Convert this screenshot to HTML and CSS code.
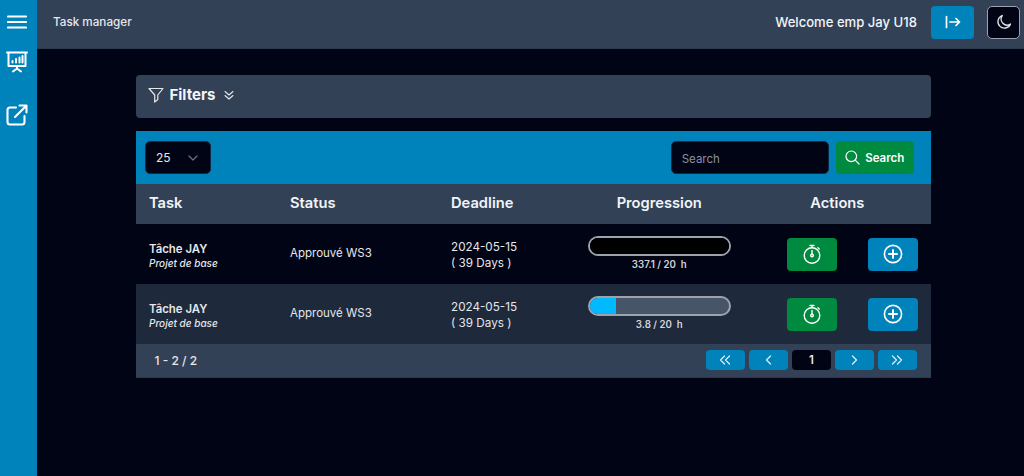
FILE: index.html
```html
<!DOCTYPE html>
<html lang="en">
<head>
<meta charset="utf-8">
<title>Task manager</title>
<link rel="stylesheet" href="styles.css">
</head>
<body>
<div class="app">
  <aside class="sidebar">
    <button class="side-btn menu" aria-label="Menu">
      <svg width="20" height="14" viewBox="0 0 20 14" fill="none" stroke="#fff" stroke-width="2.200" stroke-linecap="round"><path d="M1 1.500h18M1 7h18M1 12.500h18"/></svg>
    </button>
    <a class="side-btn board" aria-label="Board">
      <svg width="22" height="22" viewBox="0 0 22 22" fill="none" stroke="#fff" stroke-width="2" stroke-linecap="round" stroke-linejoin="round"><path d="M1 1.500h20M2.500 1.500v13.500h17V1.500M11 15v2.500M7 20.500l4-3 4 3"/><path d="M6.500 11.500v-1.500M10 11.500V8M13.500 11.500V6.500M16.500 11.500V5"/></svg>
    </a>
    <a class="side-btn external" aria-label="Open">
      <svg width="22" height="22" viewBox="0 0 22 22" fill="none" stroke="#fff" stroke-width="2.100" stroke-linecap="round" stroke-linejoin="round"><path d="M10 3.500H4a2.500 2.500 0 0 0-2.500 2.500v12A2.500 2.500 0 0 0 4 20.500h12a2.500 2.500 0 0 0 2.500-2.500v-6"/><path d="M13.500 1.500h7v7M20.500 1.500 9 13"/></svg>
    </a>
  </aside>
  <div class="main">
    <header class="topbar">
      <span class="app-title">Task manager</span>
      <div class="top-right">
        <span class="welcome">Welcome emp Jay U18</span>
        <button class="logout" aria-label="Log out">
          <svg width="16" height="14" viewBox="0 0 16 14" fill="none" stroke="#fff" stroke-width="1.700" stroke-linecap="round" stroke-linejoin="round"><path d="M1.500 1.500v11M5 7h9.500M11 3.500 14.500 7 11 10.500"/></svg>
        </button>
        <button class="theme" aria-label="Theme">
          <svg width="16" height="16" viewBox="0 0 16 16" fill="none" stroke="#e5e7eb" stroke-width="1.300" stroke-linejoin="round"><path d="M6.300 1.500A6.500 6.500 0 1 0 14.500 10 6 6 0 0 1 6.300 1.500Z"/></svg>
        </button>
      </div>
    </header>
    <main class="content">
      <section class="filters">
        <svg class="funnel" width="16" height="16" viewBox="0 0 16 16" fill="none" stroke="#e5e7eb" stroke-width="1.200" stroke-linejoin="round"><path d="M1 1.500h14L9.800 8v4.500L6.700 15V8Z"/></svg>
        <strong class="filters-label">Filters</strong>
        <svg width="10" height="10" viewBox="0 0 10 10" fill="none" stroke="#e5e7eb" stroke-width="1.100" stroke-linecap="round" stroke-linejoin="round"><path d="M1 1.500 5 5l4-3.500M1 5.500 5 9l4-3.500"/></svg>
      </section>
      <section class="panel">
        <div class="toolbar">
          <div class="select">
            <span>25</span>
            <svg width="10" height="6" viewBox="0 0 10 6" fill="none" stroke="#6b7280" stroke-width="1.200" stroke-linecap="round" stroke-linejoin="round"><path d="M1 1l4 4 4-4"/></svg>
          </div>
          <div class="search-group">
            <div class="search-input">Search</div>
            <button class="search-btn">
              <svg width="15" height="15" viewBox="0 0 15 15" fill="none" stroke="#fff" stroke-width="1.200" stroke-linecap="round"><circle cx="6.300" cy="6.300" r="5.300"/><path d="M10.200 10.200 14 14"/></svg>
              <span>Search</span>
            </button>
          </div>
        </div>
        <table class="tasks">
          <thead>
            <tr>
              <th class="col-task">Task</th>
              <th class="col-status">Status</th>
              <th class="col-deadline">Deadline</th>
              <th class="col-progress center">Progression</th>
              <th class="col-actions center">Actions</th>
            </tr>
          </thead>
          <tbody>
            <tr>
              <td class="task"><div class="task-name">Tâche JAY</div><div class="task-project">Projet de base</div></td>
              <td class="status">Approuvé WS3</td>
              <td class="deadline">2024-05-15<br>( 39 Days )</td>
              <td class="center">
                <div class="bar"><div class="fill over" style="width:100%"></div></div>
                <div class="hours">337.1 / 20&nbsp; h</div>
              </td>
              <td>
                <div class="actions">
                  <button class="act green" aria-label="Timer">
                    <svg width="20" height="22" viewBox="0 0 20 22" fill="none" stroke="#fff" stroke-width="1.400" stroke-linecap="round"><circle cx="10" cy="12.500" r="7.800"/><path d="M8 2.500h4M10 2.500v2M16 4.800l1.200 1.200"/><circle cx="10" cy="12.500" r="1.300"/><path d="M10 11V7.500"/></svg>
                  </button>
                  <button class="act blue" aria-label="Add">
                    <svg width="20" height="20" viewBox="0 0 20 20" fill="none" stroke="#fff" stroke-linecap="round"><circle cx="10" cy="10" r="8.600" stroke-width="1.600"/><path d="M10 6v8M6 10h8" stroke-width="1.900"/></svg>
                  </button>
                </div>
              </td>
            </tr>
            <tr class="alt">
              <td class="task"><div class="task-name">Tâche JAY</div><div class="task-project">Projet de base</div></td>
              <td class="status">Approuvé WS3</td>
              <td class="deadline">2024-05-15<br>( 39 Days )</td>
              <td class="center">
                <div class="bar"><div class="fill" style="width:19%"></div></div>
                <div class="hours">3.8 / 20&nbsp; h</div>
              </td>
              <td>
                <div class="actions">
                  <button class="act green" aria-label="Timer">
                    <svg width="20" height="22" viewBox="0 0 20 22" fill="none" stroke="#fff" stroke-width="1.400" stroke-linecap="round"><circle cx="10" cy="12.500" r="7.800"/><path d="M8 2.500h4M10 2.500v2M16 4.800l1.200 1.200"/><circle cx="10" cy="12.500" r="1.300"/><path d="M10 11V7.500"/></svg>
                  </button>
                  <button class="act blue" aria-label="Add">
                    <svg width="20" height="20" viewBox="0 0 20 20" fill="none" stroke="#fff" stroke-linecap="round"><circle cx="10" cy="10" r="8.600" stroke-width="1.600"/><path d="M10 6v8M6 10h8" stroke-width="1.900"/></svg>
                  </button>
                </div>
              </td>
            </tr>
          </tbody>
        </table>
        <div class="pager-row">
          <span class="count">1 - 2 / 2</span>
          <div class="pager">
            <button class="page" aria-label="First"><svg width="12" height="10" viewBox="0 0 12 10" fill="none" stroke="#dbeafe" stroke-width="1.300" stroke-linecap="round" stroke-linejoin="round"><path d="M5.500 1 1.500 5l4 4M10.500 1l-4 4 4 4"/></svg></button>
            <button class="page" aria-label="Previous"><svg width="7" height="10" viewBox="0 0 7 10" fill="none" stroke="#dbeafe" stroke-width="1.400" stroke-linecap="round" stroke-linejoin="round"><path d="M5.500 1 1.500 5l4 4"/></svg></button>
            <span class="current">1</span>
            <button class="page" aria-label="Next"><svg width="7" height="10" viewBox="0 0 7 10" fill="none" stroke="#dbeafe" stroke-width="1.400" stroke-linecap="round" stroke-linejoin="round"><path d="M1.500 1l4 4-4 4"/></svg></button>
            <button class="page" aria-label="Last"><svg width="12" height="10" viewBox="0 0 12 10" fill="none" stroke="#dbeafe" stroke-width="1.300" stroke-linecap="round" stroke-linejoin="round"><path d="M1.500 1l4 4-4 4M6.500 1l4 4-4 4"/></svg></button>
          </div>
        </div>
      </section>
    </main>
  </div>
</div>
</body>
</html>
```

FILE: styles.css
```css
* { box-sizing: border-box; }
html, body { margin: 0; height: 100%; }
body {
  background: #000414;
  color: #e5e7eb;
  font-family: Inter, "Liberation Sans", sans-serif;
  overflow: hidden;
}
button { border: 0; padding: 0; font-family: inherit; cursor: pointer; }
svg { display: block; }

.app { display: flex; height: 476px; }
.sidebar {
  width: 36.500px;
  flex: none;
  background: #0082bb;
  display: flex;
  flex-direction: column;
  align-items: flex-start;
}
.side-btn {
  display: flex;
  justify-content: center;
  align-items: center;
  background: none;
  width: 33px;
}
.menu { height: 14px; margin-top: 15px; }
.board { height: 22px; margin-top: 22px; }
.external { height: 22px; margin-top: 31px; }

.main { flex: 1; min-width: 0; display: flex; flex-direction: column; }
.topbar {
  height: 49px;
  flex: none;
  background: #334157;
  border-bottom: 1px solid #2c384d;
  display: flex;
  align-items: center;
  justify-content: space-between;
  padding: 0 4px 4px 16.500px;
}
.app-title { font-size: 11.700px; font-weight: 500; color: #e5e7eb; }
.top-right { display: flex; align-items: center; }
.welcome { font-size: 13.100px; font-weight: 500; color: #f1f5f9; margin-right: 14px; }
.logout {
  width: 43px;
  height: 33px;
  background: #0082bb;
  border-radius: 4px;
  display: flex;
  justify-content: center;
  align-items: center;
  margin-right: 13px;
}
.theme {
  width: 33px;
  height: 33px;
  background: #000414;
  border: 1px solid #9ca3af;
  border-radius: 5px;
  display: flex;
  justify-content: center;
  align-items: center;
}

.content { padding: 26px 93.300px 0 99px; }
.filters {
  height: 43px;
  background: #334157;
  border-radius: 4px;
  display: flex;
  align-items: center;
  padding: 0 0 4px 12px;
}
.funnel { margin-right: 6px; }
.filters-label { font-size: 15px; font-weight: 700; color: #f1f5f9; margin-right: 9px; }

.panel { margin-top: 13px; }
.toolbar {
  height: 53.300px;
  background: #0082bb;
  display: flex;
  align-items: center;
  justify-content: space-between;
  padding: 0 17px 0 9.500px;
}
.select {
  width: 66px;
  height: 33px;
  background: #000414;
  border: 1px solid #0f2a44;
  border-radius: 5px;
  display: flex;
  align-items: center;
  justify-content: space-between;
  padding: 0 12px 0 10px;
  font-size: 12px;
  color: #e5e7eb;
}
.search-group { display: flex; align-items: center; gap: 7px; }
.search-input {
  width: 158px;
  height: 33px;
  background: #000414;
  border: 1px solid #0f2a44;
  border-radius: 5px;
  display: flex;
  align-items: center;
  padding: 2px 0 0 10px;
  font-size: 11.500px;
  color: #8b93a3;
}
.search-btn {
  width: 78px;
  height: 33px;
  background: #008a3f;
  border-radius: 4px;
  color: #fff;
  font-size: 11.500px;
  font-weight: 600;
  display: flex;
  align-items: center;
  justify-content: center;
  gap: 5px;
}

.tasks { width: 100%; border-collapse: collapse; table-layout: fixed; }
.tasks th {
  height: 40px;
  background: #334157;
  color: #f1f5f9;
  font-size: 14.700px;
  font-weight: 600;
  text-align: left;
  padding: 0 13px 2px 13.500px;
}
.tasks td { height: 60px; padding: 0 13px 0 13.500px; vertical-align: middle; }
.tasks .center { text-align: center; }
.col-task { width: 141px; }
.col-status { width: 161px; }
.col-deadline { width: 137px; }
.col-progress { width: 169px; }
.alt td { background: #1e293b; }
.tasks .task { padding-top: 3px; }
.task-name { font-size: 11.400px; font-weight: 600; line-height: 15px; color: #e5e7eb; }
.task-project { font-size: 10px; font-style: italic; font-weight: 500; line-height: 13px; color: #e5e7eb; }
.tasks .status { font-size: 11.500px; padding-bottom: 3px; color: #e5e7eb; }
.tasks .deadline { font-size: 11.700px; line-height: 16px; padding-top: 1px; color: #e5e7eb; }
.bar {
  width: 143px;
  height: 20px;
  border: 2px solid #9ca3af;
  border-radius: 10px;
  background: #475569;
  overflow: hidden;
}
.fill { height: 100%; background: #00b9ff; }
.over { background: #000; }
.hours { font-size: 9.700px; font-weight: 600; line-height: 14px; margin-top: 2px; color: #d1d5db; }
.actions { display: flex; justify-content: flex-end; gap: 31px; }
.act {
  width: 50px;
  height: 33px;
  border-radius: 4px;
  display: flex;
  align-items: center;
  justify-content: center;
}
.green { background: #008a3f; }
.blue { background: #0082bb; }

.pager-row {
  height: 33.400px;
  background: #334157;
  border-bottom: 1px solid #2c384d;
  display: flex;
  align-items: center;
  justify-content: space-between;
  padding: 0 13.500px 0 19px;
}
.count { font-size: 12px; font-weight: 500; color: #e5e7eb; }
.pager { display: flex; gap: 3.500px; }
.page {
  width: 39.500px;
  height: 20px;
  background: #0082bb;
  border-radius: 4px;
  display: flex;
  align-items: center;
  justify-content: center;
}
.current {
  width: 39.500px;
  height: 20px;
  background: #000414;
  border-radius: 4px;
  font-size: 11.500px;
  font-weight: 600;
  display: flex;
  align-items: center;
  justify-content: center;
  color: #e5e7eb;
}
```
